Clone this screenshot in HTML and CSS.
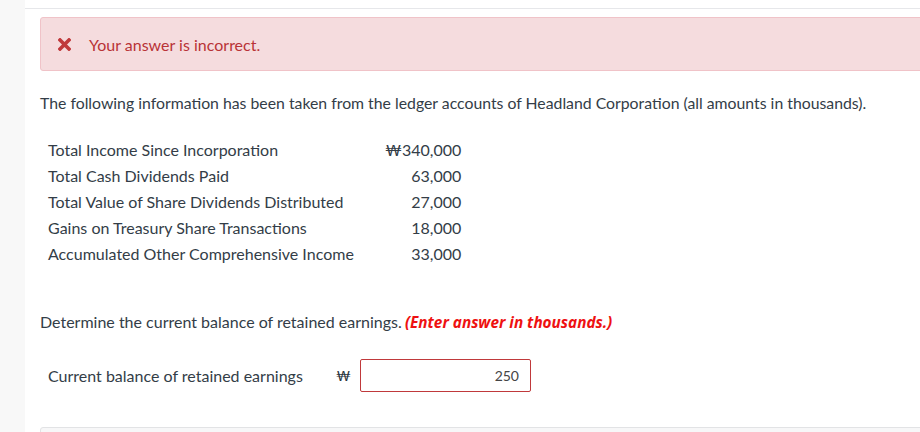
FILE: index.html
```html
<!DOCTYPE html>
<html>
<head>
<meta charset="utf-8">
<link rel="stylesheet" href="styles.css">
</head>
<body>
<div class="page">
  <div class="side"></div>
  <div class="main">
    <div class="topline"></div>
    <div class="content">
      <div class="alert">
        <svg class="xicon" width="13" height="13" viewBox="0 0 13 13"><path d="M2 2 L11 11 M11 2 L2 11" stroke="#c0393b" stroke-width="3.6" stroke-linecap="square"/></svg>
        <span>Your answer is incorrect.</span>
      </div>
      <p class="intro">The following information has been taken from the ledger accounts of Headland Corporation (all amounts in thousands).</p>
      <table class="ledger">
        <tr><td class="lbl">Total Income Since Incorporation</td><td class="val">₩340,000</td></tr>
        <tr><td class="lbl">Total Cash Dividends Paid</td><td class="val">63,000</td></tr>
        <tr><td class="lbl">Total Value of Share Dividends Distributed</td><td class="val">27,000</td></tr>
        <tr><td class="lbl">Gains on Treasury Share Transactions</td><td class="val">18,000</td></tr>
        <tr><td class="lbl">Accumulated Other Comprehensive Income</td><td class="val">33,000</td></tr>
      </table>
      <p class="question">Determine the current balance of retained earnings. <em class="hint">(Enter answer in thousands.)</em></p>
      <div class="answer">
        <span class="alabel">Current balance of retained earnings</span>
        <span class="won">₩</span>
        <div class="inputbox">250</div>
      </div>
      <div class="nextbox"></div>
    </div>
  </div>
</div>
</body>
</html>
```
FILE: styles.css
```css
html, body { margin: 0; padding: 0; background: #fff; }
body { font-family: Lato, "Open Sans", sans-serif; color: #333d47; }
.page { display: flex; width: 920px; height: 432px; overflow: hidden; }
.side { width: 25px; flex: none; background: #f8f8f8; }
.main { flex: 1; display: flex; flex-direction: column; }
.topline { height: 8px; border-bottom: 1px solid #e6e7ea; flex: none; }
.content { padding: 8px 0 0 15px; }
.alert {
  height: 52px; margin-right: -10px;
  background: #f5dcde; border: 1px solid #f0c3c8; border-radius: 3px;
  display: flex; align-items: center; padding-left: 17px;
  color: #b93337; font-size: 16px;
}
.xicon { margin-right: 18px; margin-top: 1px; }
.intro { margin: 22px 0 0 0; font-size: 15.8px; line-height: 20px; }
.ledger { border-collapse: collapse; margin: 24px 0 0 8px; font-size: 16px; }
.ledger td { padding: 0; height: 26px; line-height: 26px; }
.lbl { width: 337px; }
.val { text-align: right; width: 76px; }
.question { margin: 45px 0 0 0; font-size: 16px; line-height: 20px; }
.hint { color: #ee1111; font-weight: 700; font-style: italic; font-family: "Open Sans", Lato, sans-serif; font-size: 15.3px; margin-left: -1px; }
.answer { display: flex; align-items: center; margin: 27px 0 0 8px; font-size: 16px; }
.alabel { width: 288px; }
.won { width: 24px; font-size: 14px; color: #2b3640; }
.inputbox {
  width: 158px; height: 31px; border: 1px solid #c0393b; border-radius: 2px;
  display: flex; align-items: center; justify-content: flex-end; padding-right: 11px;
  font-size: 14px; color: #444;
}
.nextbox { margin-top: 35px; height: 20px; background: #f7f7f8; border: 1px solid #e2e3e5; border-radius: 3px; margin-right: -10px; }
```
